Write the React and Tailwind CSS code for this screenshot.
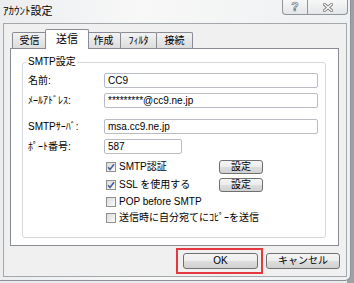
import React from "react";

const btnBg =
  "bg-[linear-gradient(to_bottom,#f5f5f5_0%,#ececec_50%,#dedede_51%,#d0d0d0_100%)]";

function Tab({ label, w, active }) {
  if (active) {
    return (
      <div
        className={`relative z-10 -mx-[2px] -mb-px h-[20px] ${w} flex items-center justify-center border border-b-0 border-[#898c95] bg-white rounded-t-[2px] text-[11px] text-black`}
      >
        {label}
      </div>
    );
  }
  return (
    <div
      className={`h-[16px] ${w} -ml-px first:ml-0 flex items-center justify-center border border-b-0 border-[#898c95] bg-[linear-gradient(to_bottom,#f3f3f3,#dcdcdc)] rounded-t-[2px] text-[10px] text-black`}
    >
      {label}
    </div>
  );
}

function Field({ label, value, w = "w-[214px]", mt }) {
  return (
    <div className={`flex items-center ${mt}`}>
      <div className="w-[76px] text-[10px] text-black leading-none">{label}</div>
      <div
        className={`${w} h-[15px] flex items-center pl-[3px] border border-[#b9bdc3] rounded-[2px] bg-white text-[10px] text-black leading-none`}
      >
        {value}
      </div>
    </div>
  );
}

function Check({ label, checked, button, h }) {
  return (
    <div className={`flex items-center ${h}`}>
      <div className="w-[113px] shrink-0 flex items-center gap-[3px]">
        <div className="w-[10px] h-[10px] shrink-0 border border-[#8e8f8f] bg-[linear-gradient(135deg,#dcdcdc,#fbfbfb)] flex items-center justify-center">
          {checked && (
            <svg width="8" height="8" viewBox="0 0 8 8">
              <path d="M1 4.2 L3 6.4 L7 1.2" fill="none" stroke="#4a5f97" strokeWidth="1.6" />
            </svg>
          )}
        </div>
        <span className="text-[10px] text-black leading-none whitespace-nowrap">{label}</span>
      </div>
      {button && (
        <div
          className={`w-[44px] h-[14px] flex items-center justify-center border border-[#707070] rounded-[3px] ${btnBg} text-[10px] text-black leading-none`}
        >
          設定
        </div>
      )}
    </div>
  );
}

export default function App() {
  return (
    <div className="w-[354px] h-[283px] overflow-hidden bg-[linear-gradient(to_right,#e8eaec_98%,#9ea2a6_98%)] font-['Liberation_Sans','Noto_Sans_CJK_JP',sans-serif]">
      <div className="w-[351px] h-[281px] border-r border-b border-[#8d9298] rounded-br-[6px] bg-[linear-gradient(to_right,#ebedef,#f8f8f8_40%,#eef0f1)] flex flex-col">
        {/* title bar */}
        <div className="h-[23px] flex justify-between items-start">
          <div className="pl-[3px] pt-[6px] text-[11px] text-black leading-none">ｱｶｳﾝﾄ設定</div>
          <div className="flex mr-[2px]">
            <div className="w-[26px] h-[15px] flex items-center justify-center border border-t-0 border-[#8e949a] rounded-bl-[4px] bg-[linear-gradient(to_bottom,#f7f7f7,#e4e6e8)] text-[12px] font-bold text-white leading-none [-webkit-text-stroke:0.7px_#707070]">
              ?
            </div>
            <div className="w-[40px] h-[15px] flex items-center justify-center border border-t-0 border-l-0 border-[#8e949a] rounded-br-[4px] bg-[linear-gradient(to_bottom,#f7f7f7,#e4e6e8)]">
              <svg width="10" height="9" viewBox="0 0 10 9">
                <path d="M1.5 1.5 L8.5 7.5 M8.5 1.5 L1.5 7.5" stroke="#7a7a7a" strokeWidth="3" strokeLinecap="square" />
                <path d="M1.5 1.5 L8.5 7.5 M8.5 1.5 L1.5 7.5" stroke="#ffffff" strokeWidth="1.3" strokeLinecap="square" />
              </svg>
            </div>
          </div>
        </div>

        {/* client area */}
        <div className="ml-[3px] w-[344px] h-[254px] border border-[#a3a8ad] bg-[#f0f0f0] flex flex-col">
          <div className="pt-[5px] pl-[6px]">
            <div className="h-[19px] pl-[2px] flex items-end">
              <Tab label="受信" w="w-[35px]" />
              <Tab label="送信" w="w-[44px]" active />
              <Tab label="作成" w="w-[35px]" />
              <Tab label="ﾌｨﾙﾀ" w="w-[37px]" />
              <Tab label="接続" w="w-[37px]" />
            </div>
            <div className="w-[329px] h-[198px] border border-[#898c95] bg-white pl-[11px] pt-[13px]">
              <div className="relative w-[304px] h-[176px] border border-[#d3d8dc] rounded-[3px] pl-[5px] pt-[10px]">
                <span className="absolute -top-[6px] left-[3px] px-[2px] bg-white text-[10px] text-black leading-none">
                  SMTP設定
                </span>
                <Field label="名前:" value="CC9" />
                <Field label="ﾒｰﾙｱﾄﾞﾚｽ:" value="*********@cc9.ne.jp" mt="mt-[5px]" />
                <Field label="SMTPｻｰﾊﾞ:" value="msa.cc9.ne.jp" mt="mt-[11px]" />
                <Field label="ﾎﾟｰﾄ番号:" value="587" w="w-[78px]" mt="mt-[5px]" />
                <div className="mt-[4px] ml-[78px]">
                  <Check label="SMTP認証" checked button h="h-[18px]" />
                  <Check label="SSL を使用する" checked button h="h-[18px]" />
                  <Check label="POP before SMTP" h="h-[16px]" />
                  <Check label="送信時に自分宛てにｺﾋﾟｰを送信" h="h-[16px]" />
                </div>
              </div>
            </div>
          </div>

          {/* buttons */}
          <div className="mt-[7px] pr-[6px] flex justify-end gap-[8px]">
            <div className="relative">
              <div
                className={`w-[75px] h-[16px] flex items-center justify-center border border-[#707070] rounded-[3px] ${btnBg} text-[10px] text-black leading-none`}
              >
                OK
              </div>
              <span className="absolute -left-[7px] -right-[5px] -top-[5px] -bottom-[5px] border-2 border-[#e6393f]" />
            </div>
            <div
              className={`w-[74px] h-[16px] flex items-center justify-center border border-[#707070] rounded-[3px] ${btnBg} text-[10px] text-black leading-none`}
            >
              キャンセル
            </div>
          </div>
        </div>
      </div>
    </div>
  );
}
